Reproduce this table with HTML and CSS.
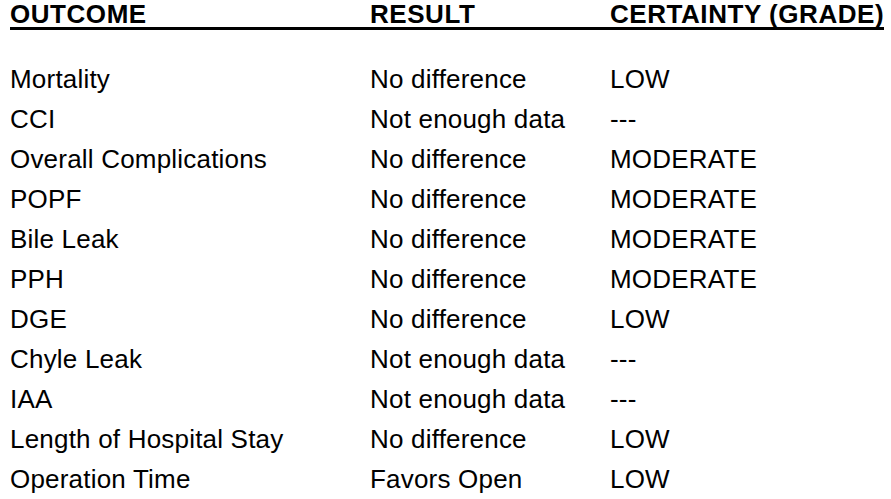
FILE: index.html
```html
<!DOCTYPE html>
<html lang="en">
<head>
<meta charset="utf-8">
<title>Outcomes</title>
<link rel="stylesheet" href="styles.css">
</head>
<body>
<div class="table">
  <div class="head">
    <div>OUTCOME</div>
    <div>RESULT</div>
    <div>CERTAINTY (GRADE)</div>
  </div>
  <div class="rows">
    <div class="row"><div>Mortality</div><div>No difference</div><div>LOW</div></div>
    <div class="row"><div>CCI</div><div>Not enough data</div><div>---</div></div>
    <div class="row"><div>Overall Complications</div><div>No difference</div><div>MODERATE</div></div>
    <div class="row"><div>POPF</div><div>No difference</div><div>MODERATE</div></div>
    <div class="row"><div>Bile Leak</div><div>No difference</div><div>MODERATE</div></div>
    <div class="row"><div>PPH</div><div>No difference</div><div>MODERATE</div></div>
    <div class="row"><div>DGE</div><div>No difference</div><div>LOW</div></div>
    <div class="row"><div>Chyle Leak</div><div>Not enough data</div><div>---</div></div>
    <div class="row"><div>IAA</div><div>Not enough data</div><div>---</div></div>
    <div class="row"><div>Length of Hospital Stay</div><div>No difference</div><div>LOW</div></div>
    <div class="row"><div>Operation Time</div><div>Favors Open</div><div>LOW</div></div>
  </div>
</div>
</body>
</html>
```

FILE: styles.css
```css
html, body {
  margin: 0;
  padding: 0;
  background: #ffffff;
}
body {
  font-family: "Liberation Sans", Arial, sans-serif;
  font-size: 26px;
  color: #000000;
  overflow: hidden;
}
.table {
  padding-left: 10px;
  width: 874px;
}
.head, .row {
  display: grid;
  grid-template-columns: 360px 240px 1fr;
  white-space: nowrap;
}
.head {
  font-weight: bold;
  letter-spacing: 0.55px;
  line-height: 25px;
  padding-top: 2px;
  border-bottom: 3px solid #000000;
}
.rows {
  padding-top: 29px;
}
.row {
  line-height: 40px;
  letter-spacing: 0.2px;
}
```
